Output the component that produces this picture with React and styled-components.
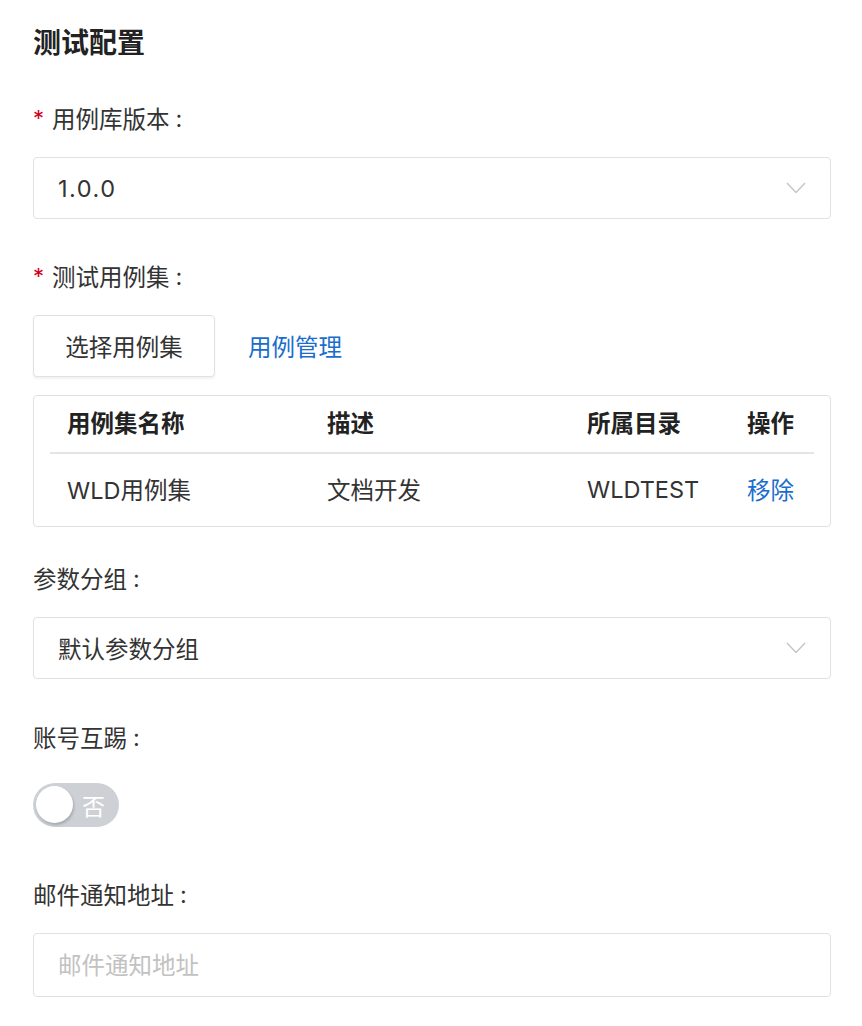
import React from 'react';
import styled, { createGlobalStyle } from 'styled-components';

const GlobalStyle = createGlobalStyle`
  html, body {
    margin: 0;
    padding: 0;
    background: #ffffff;
  }
  body {
    font-family: Inter, "Noto Sans CJK SC", sans-serif;
    color: #333333;
  }
`;

const Page = styled.div`
  padding: 25px 31px 20px 33px;
`;

const Title = styled.h2`
  margin: 0 0 39px;
  font-size: 28px;
  line-height: 36px;
  font-weight: 700;
  color: #222222;
`;

const FormItem = styled.div`
  display: flex;
  flex-direction: column;
  margin-bottom: ${p => p.$mb || 39}px;
`;

const Label = styled.div`
  display: flex;
  align-items: center;
  height: 36px;
  margin-bottom: 21px;
  font-size: 23.5px;
  color: #333333;
`;

const Star = styled.span`
  color: #d0021b;
  margin-right: 8px;
  font-size: 22px;
`;

const Colon = styled.span`
  margin-left: 6px;
`;

const SelectBox = styled.div`
  display: flex;
  align-items: center;
  justify-content: space-between;
  height: 60px;
  padding: 0 24px;
  border: 1px solid #e1e1e1;
  border-radius: 4px;
  font-size: 23.5px;
  color: #333333;
`;

const Version = styled.span`
  letter-spacing: 1.5px;
`;

const Input = styled.input`
  box-sizing: border-box;
  width: 100%;
  height: 64px;
  padding: 0 24px;
  border: 1px solid #e1e1e1;
  border-radius: 4px;
  font-family: inherit;
  font-size: 23.5px;
  color: #333333;
  outline: none;

  &::placeholder {
    color: #c2c2c2;
  }
`;

const ButtonRow = styled.div`
  display: flex;
  align-items: center;
  gap: 33px;
  margin-bottom: 18px;
`;

const Button = styled.button`
  height: 62px;
  width: 182px;
  padding: 0;
  border: 1px solid #e1e1e1;
  border-radius: 4px;
  background: #ffffff;
  box-shadow: 0 2px 2px rgba(0, 0, 0, 0.05);
  font-family: inherit;
  font-size: 23.5px;
  color: #333333;
`;

const Link = styled.a`
  font-size: 23.5px;
  color: #1a6dcd;
  text-decoration: none;
  cursor: pointer;
`;

const TableBox = styled.div`
  border: 1px solid #e1e1e1;
  border-radius: 4px;
  padding: 0 16px;
`;

const TableRow = styled.div`
  display: grid;
  grid-template-columns: 260px 260px 160px 1fr;
  align-items: center;
  height: ${p => (p.$head ? 56 : 72)}px;
  border-bottom: ${p => (p.$head ? '2px solid #e4e4e4' : 'none')};
  font-size: 23.5px;
  font-weight: ${p => (p.$head ? 700 : 400)};
  color: ${p => (p.$head ? '#222222' : '#333333')};
`;

const Cell = styled.div`
  padding-left: 17px;
  padding-bottom: ${p => (p.$head ? 4 : 2)}px;
`;

const CellLink = styled(Cell)`
  color: #1a6dcd;
  cursor: pointer;
`;

const Toggle = styled.div`
  position: relative;
  align-self: flex-start;
  width: 86px;
  height: 44px;
  margin-top: 7px;
  border-radius: 22px;
  background: #cdd1d5;
  display: flex;
  align-items: center;
  justify-content: flex-end;
  padding-right: 14px;
  box-sizing: border-box;
  font-size: 23px;
  color: #ffffff;
`;

const Knob = styled.span`
  position: absolute;
  left: 3px;
  top: 3px;
  width: 37px;
  height: 37px;
  border-radius: 50%;
  background: #ffffff;
  box-shadow: 1px 2px 3px rgba(0, 0, 0, 0.2);
`;

const Chevron = () => (
  <svg width="20" height="12" viewBox="0 0 20 12" fill="none">
    <polyline points="1,1 10,10.5 19,1" stroke="#c4c4c4" strokeWidth="1.4" />
  </svg>
);

const rows = [
  { name: 'WLD用例集', desc: '文档开发', dir: 'WLDTEST' },
];

const App = () => (
  <>
    <GlobalStyle />
    <Page>
      <Title>测试配置</Title>

      <FormItem>
        <Label><Star>*</Star>用例库版本<Colon>:</Colon></Label>
        <SelectBox>
          <Version>1.0.0</Version>
          <Chevron />
        </SelectBox>
      </FormItem>

      <FormItem $mb={33}>
        <Label><Star>*</Star>测试用例集<Colon>:</Colon></Label>
        <ButtonRow>
          <Button>选择用例集</Button>
          <Link>用例管理</Link>
        </ButtonRow>
        <TableBox>
          <TableRow $head>
            <Cell $head>用例集名称</Cell>
            <Cell $head>描述</Cell>
            <Cell $head>所属目录</Cell>
            <Cell $head>操作</Cell>
          </TableRow>
          {rows.map(r => (
            <TableRow key={r.name}>
              <Cell>{r.name}</Cell>
              <Cell>{r.desc}</Cell>
              <Cell>{r.dir}</Cell>
              <CellLink>移除</CellLink>
            </TableRow>
          ))}
        </TableBox>
      </FormItem>

      <FormItem $mb={40}>
        <Label>参数分组<Colon>:</Colon></Label>
        <SelectBox>
          <span>默认参数分组</span>
          <Chevron />
        </SelectBox>
      </FormItem>

      <FormItem $mb={49}>
        <Label>账号互踢<Colon>:</Colon></Label>
        <Toggle>
          <Knob />
          否
        </Toggle>
      </FormItem>

      <FormItem>
        <Label>邮件通知地址<Colon>:</Colon></Label>
        <Input placeholder="邮件通知地址" />
      </FormItem>
    </Page>
  </>
);

export default App;
